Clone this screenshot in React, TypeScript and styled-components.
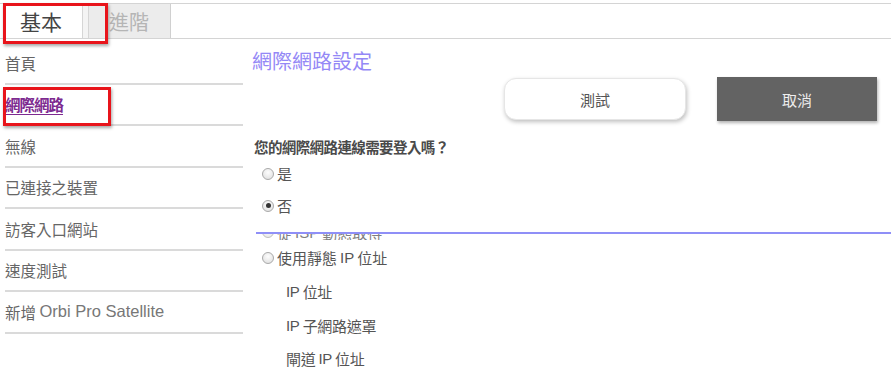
import React from "react";
import styled, { createGlobalStyle } from "styled-components";

const Global = createGlobalStyle`
  html, body { margin: 0; padding: 0; background: #fff; }
  body { font-family: "Noto Sans CJK TC", "Liberation Sans", sans-serif; color: #555; }
`;

const Page = styled.div`
  width: 891px;
  height: 391px;
  overflow: hidden;
  position: relative;
`;

const TabBar = styled.div`
  margin-top: 3px;
  height: 34px;
  border-top: 1px solid #d4d4d4;
  border-bottom: 1px solid #d4d4d4;
  display: flex;
  padding-left: 5px;
  position: relative;
`;

const Tab = styled.div<{ $active?: boolean }>`
  width: ${(p) => (p.$active ? 77 : 82)}px;
  display: flex;
  align-items: center;
  padding-left: ${(p) => (p.$active ? 15 : 20)}px;
  box-sizing: border-box;
  font-size: ${(p) => (p.$active ? 21 : 20)}px;
  color: ${(p) => (p.$active ? "#444" : "#b5b5b5")};
  background: ${(p) => (p.$active ? "#fff" : "#ececec")};
  border-right: ${(p) => (p.$active ? "none" : "1px solid #d0d0d0")};
`;

const TabGap = styled.div`
  width: 5px;
  background: #f4f4f4;
  border-left: 1px solid #d6d6d6;
  border-right: 1px solid #d6d6d6;
`;

const Highlight = styled.div<{ $l: number; $t: number; $w: number; $h: number }>`
  position: absolute;
  left: ${(p) => p.$l}px;
  top: ${(p) => p.$t}px;
  width: ${(p) => p.$w}px;
  height: ${(p) => p.$h}px;
  border: 3px solid #e8141b;
  box-sizing: border-box;
  box-shadow: 1px 2px 3px rgba(0, 0, 0, 0.35);
  pointer-events: none;
`;

const Body = styled.div`
  display: grid;
  grid-template-columns: 238px 1fr;
  column-gap: 7px;
  padding-left: 5px;
  margin-top: 4px;
`;

const Sidebar = styled.div`
  display: flex;
  flex-direction: column;
`;

const NavItem = styled.div<{ $active?: boolean }>`
  height: 39.5px;
  border-bottom: 2px solid #dadada;
  display: flex;
  align-items: center;
  font-size: 15.5px;
  color: ${(p) => (p.$active ? "#7d2a90" : "#666")};
  font-weight: ${(p) => (p.$active ? 700 : 400)};
  text-decoration: ${(p) => (p.$active ? "underline" : "none")};
  text-underline-offset: 3px;
  letter-spacing: ${(p) => (p.$active ? "-1px" : "0")};
  white-space: nowrap;
`;

const Latin = styled.span`
  font-family: "Liberation Sans", sans-serif;
  font-size: 16.5px;
  color: #777;
`;

const Content = styled.div`
  display: flex;
  flex-direction: column;
`;

const Title = styled.div`
  font-size: 20px;
  color: #9488f6;
  height: 32px;
  display: flex;
  align-items: center;
  padding-left: 2px;
  margin-top: 1px;
`;

const ButtonRow = styled.div`
  display: flex;
  justify-content: flex-end;
  align-items: center;
  gap: 31px;
  padding-right: 14px;
  height: 46px;
`;

const TestButton = styled.div`
  width: 182px;
  height: 42px;
  border-radius: 12px;
  background: #fff;
  border: 1px solid #e6e6e6;
  box-shadow: 1px 2px 4px rgba(0, 0, 0, 0.25);
  display: flex;
  align-items: center;
  justify-content: center;
  font-size: 15px;
  color: #555;
  box-sizing: border-box;
`;

const CancelButton = styled.div`
  width: 160px;
  height: 44px;
  background: #636363;
  box-shadow: 1px 2px 3px rgba(0, 0, 0, 0.3);
  display: flex;
  align-items: center;
  justify-content: center;
  font-size: 15px;
  color: #eee;
`;

const Question = styled.div`
  margin-top: 13px;
  padding-left: 4px;
  font-size: 14.5px;
  font-weight: 700;
  color: #4a4a4a;
  letter-spacing: -0.6px;
  height: 22px;
  display: flex;
  align-items: center;
`;

const RadioRow = styled.div<{ $h?: number }>`
  height: ${(p) => p.$h ?? 31}px;
  display: flex;
  align-items: center;
  gap: 3px;
  padding-left: 12px;
  font-size: 15px;
  color: #555;
  white-space: nowrap;
`;

const RadioDot = styled.span<{ $checked?: boolean }>`
  width: 12px;
  height: 12px;
  border-radius: 50%;
  border: 1px solid #a9a9a9;
  background: radial-gradient(circle at 50% 35%, #fdfdfd 0%, #dcdcdc 100%);
  box-sizing: border-box;
  display: inline-flex;
  align-items: center;
  justify-content: center;
  &::after {
    content: "";
    width: 5px;
    height: 5px;
    border-radius: 50%;
    background: ${(p) => (p.$checked ? "#333" : "transparent")};
  }
`;

const Divider = styled.div`
  margin-top: 11px;
  margin-left: 6px;
  height: 2px;
  background: #8f8ff7;
`;

const ClippedRow = styled.div`
  height: 6px;
  overflow: hidden;
  display: flex;
  align-items: flex-end;
  opacity: 0.75;
`;

const ClippedInner = styled.div`
  margin-bottom: -3px;
`;

const FieldLabel = styled.div`
  height: 33.5px;
  display: flex;
  align-items: center;
  padding-left: 36px;
  font-size: 15px;
  color: #555;
  letter-spacing: -0.3px;
`;

const Ip = styled.span`
  font-family: "Liberation Sans", sans-serif;
  font-size: 15px;
`;

export default function App() {
  const nav = ["首頁", "網際網路", "無線", "已連接之裝置", "訪客入口網站", "速度測試"];
  return (
    <Page>
      <Global />
      <TabBar>
        <Tab $active>基本</Tab>
        <TabGap />
        <Tab>進階</Tab>
      </TabBar>
      <Highlight $l={3} $t={3} $w={105} $h={41} />
      <Body>
        <Sidebar>
          {nav.map((n) => (
            <NavItem key={n} $active={n === "網際網路"}>
              {n}
            </NavItem>
          ))}
          <NavItem>
            新增&nbsp;<Latin>Orbi Pro Satellite</Latin>
          </NavItem>
        </Sidebar>
        <Content>
          <Title>網際網路設定</Title>
          <ButtonRow>
            <TestButton>測試</TestButton>
            <CancelButton>取消</CancelButton>
          </ButtonRow>
          <Question>您的網際網路連線需要登入嗎？</Question>
          <RadioRow $h={33}>
            <RadioDot />是
          </RadioRow>
          <RadioRow $h={31}>
            <RadioDot $checked />否
          </RadioRow>
          <Divider />
          <ClippedRow>
            <ClippedInner>
              <RadioRow $h={22}>
                <RadioDot />從 <Ip>ISP</Ip> 動態取得
              </RadioRow>
            </ClippedInner>
          </ClippedRow>
          <RadioRow $h={35}>
            <RadioDot />使用靜態 <Ip>IP</Ip> 位址
          </RadioRow>
          <FieldLabel>
            <Ip>IP</Ip>&nbsp;位址
          </FieldLabel>
          <FieldLabel>
            <Ip>IP</Ip>&nbsp;子網路遮罩
          </FieldLabel>
          <FieldLabel>
            閘道&nbsp;<Ip>IP</Ip>&nbsp;位址
          </FieldLabel>
        </Content>
      </Body>
      <Highlight $l={3} $t={87} $w={108} $h={39} />
    </Page>
  );
}
